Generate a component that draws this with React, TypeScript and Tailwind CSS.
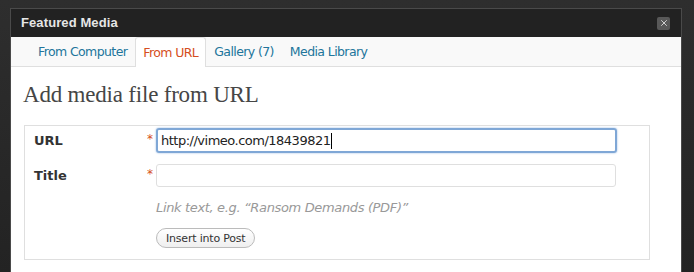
import { X } from "lucide-react";

const tabs = ["From Computer", "From URL", "Gallery (7)", "Media Library"];

export default function App() {
  return (
    <div className="w-[694px] h-[272px] overflow-hidden bg-gradient-to-b from-[#2e2e2e] to-[#232323] pt-[8px] pl-[10px]">
      <div className="w-[672px] h-[264px] border border-b-0 border-[#4a4a4a] bg-white flex flex-col">
        <div className="h-[28px] bg-[#222] flex items-center justify-between pl-[10px] pr-[11px] shrink-0">
          <span className="text-[13px] font-bold text-[#e6e6e6] font-['Liberation_Sans',sans-serif] tracking-[0.1px]">
            Featured Media
          </span>
          <span className="w-[13px] h-[13px] rounded-[2px] bg-[#585858] flex items-center justify-center">
            <X size={10} strokeWidth={2} color="#e8e8e8" />
          </span>
        </div>

        <div className="h-[30px] bg-[#f9f9f9] border-b border-[#dfdfdf] flex items-end pl-[19px] shrink-0 font-['DejaVu_Sans',sans-serif]">
          {tabs.map((t) => {
            const active = t === "From URL";
            return (
              <div
                key={t}
                className={
                  active
                    ? "h-[30px] -mb-px px-[7px] pt-[2px] flex items-center bg-white border border-b-0 border-[#dfdfdf] rounded-t-[3px] text-[12.5px] text-[#d54e21]"
                    : "h-[29px] px-[8px] pt-[2px] flex items-center text-[12.5px] text-[#21759b]"
                }
              >
                <span className="tracking-[-0.6px]">{t}</span>
              </div>
            );
          })}
        </div>

        <div className="pl-[12px] pt-[13px]">
          <h1 className="text-[23px] leading-[30px] text-[#464646] font-['Liberation_Serif',serif] tracking-[-0.2px]">
            Add media file from URL
          </h1>

          <div className="mt-[15px] ml-[1px] w-[626px] h-[135px] border border-[#dfdfdf] pt-[2px] font-['DejaVu_Sans',sans-serif]">
            <div className="flex items-center h-[25px]">
              <span className="w-[122px] pl-[9px] text-[13px] font-bold text-[#333]">URL</span>
              <span className="w-[9px] text-[#d54e21] text-[12px] -mt-[4px]">*</span>
              <div className="w-[461px] h-[25px] border-2 border-[#7fa7d6] rounded-[3px] shadow-[0_0_2px_#8fb4e0] flex items-center pl-[3px] text-[13px] text-[#222] tracking-[-0.5px]">
                http://vimeo.com/18439821
                <span className="ml-[1px] w-px h-[16px] bg-black" />
              </div>
            </div>

            <div className="flex items-center h-[23px] mt-[11px]">
              <span className="w-[122px] pl-[9px] text-[13px] font-bold text-[#333]">Title</span>
              <span className="w-[9px] text-[#d54e21] text-[12px] -mt-[4px]">*</span>
              <div className="w-[460px] h-[23px] border border-[#dfdfdf] rounded-[3px] bg-white" />
            </div>

            <div className="pl-[131px] mt-[11px] text-[13px] italic text-[#999] tracking-[-0.35px]">
              Link text, e.g. “Ransom Demands (PDF)”
            </div>

            <div className="pl-[131px] mt-[7px]">
              <button className="h-[20px] px-[9px] rounded-full border border-[#bbb] bg-gradient-to-b from-white to-[#efefef] text-[11px] text-[#333] leading-none tracking-[-0.2px]">
                Insert into Post
              </button>
            </div>
          </div>
        </div>
      </div>
    </div>
  );
}
